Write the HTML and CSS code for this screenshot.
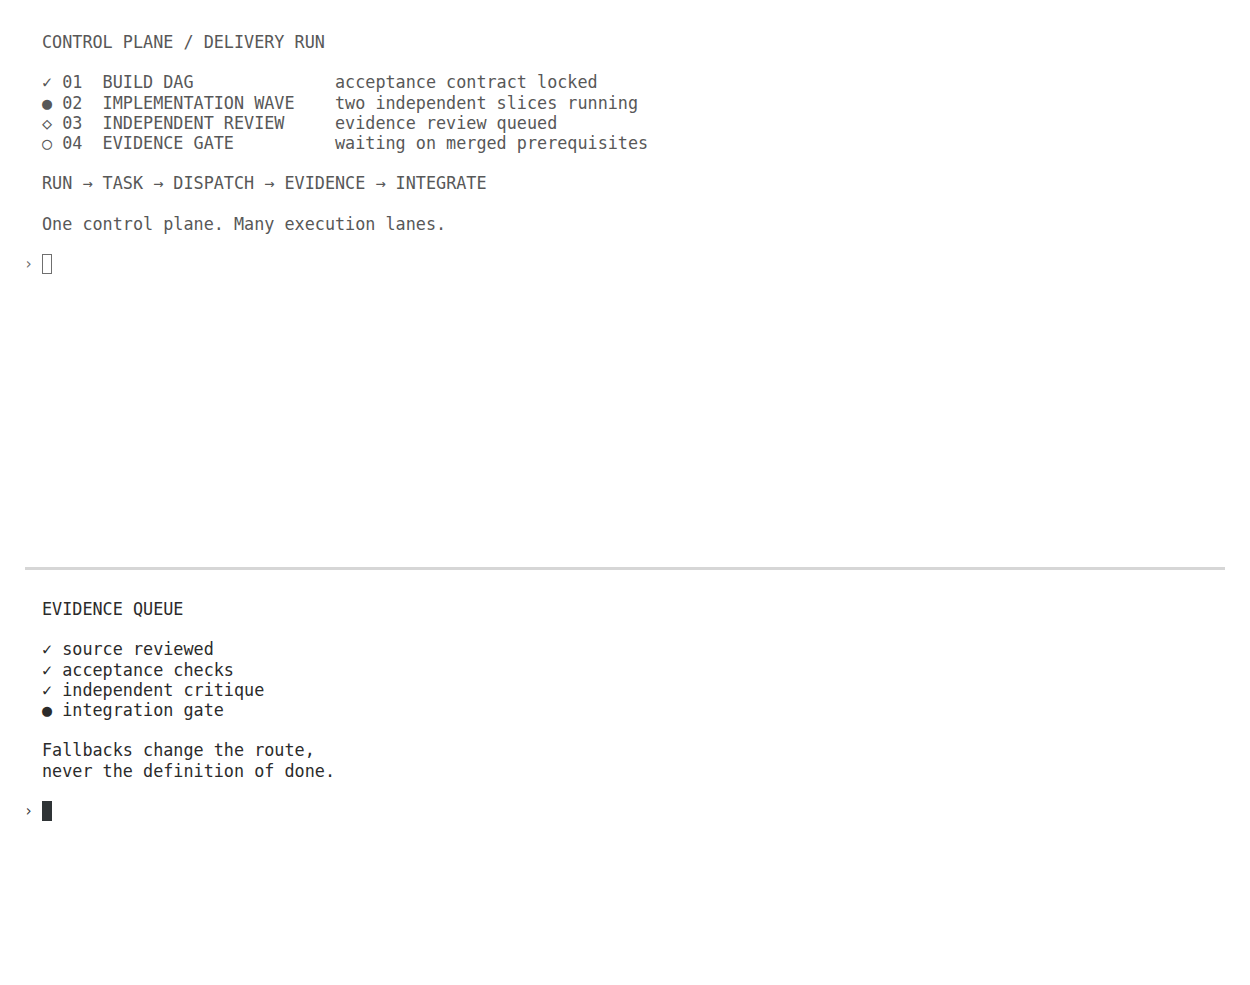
FILE: index.html
```html
<!DOCTYPE html>
<html lang="en">
<head>
<meta charset="utf-8">
<title>Control plane</title>
<link rel="stylesheet" href="styles.css">
</head>
<body>
<main class="term">
  <section class="pane pane-top dim">
    <div class="block">CONTROL PLANE / DELIVERY RUN</div>
    <div class="block steps">
      <span class="mk">✓</span><span>01</span><span>BUILD DAG</span><span>acceptance contract locked</span>
      <span class="mk">●</span><span>02</span><span>IMPLEMENTATION WAVE</span><span>two independent slices running</span>
      <span class="mk">◇</span><span>03</span><span>INDEPENDENT REVIEW</span><span>evidence review queued</span>
      <span class="mk">○</span><span>04</span><span>EVIDENCE GATE</span><span>waiting on merged prerequisites</span>
    </div>
    <div class="block">RUN → TASK → DISPATCH → EVIDENCE → INTEGRATE</div>
    <div class="block">One control plane. Many execution lanes.</div>
    <div class="prompt"><span class="caret">›</span><span class="cursor cursor-hollow"></span></div>
  </section>
  <hr class="divider">
  <section class="pane pane-bottom">
    <div class="block">EVIDENCE QUEUE</div>
    <div class="block list">
      <div><span class="mk2">✓</span>source reviewed</div>
      <div><span class="mk2">✓</span>acceptance checks</div>
      <div><span class="mk2">✓</span>independent critique</div>
      <div><span class="mk2">●</span>integration gate</div>
    </div>
    <div class="block">Fallbacks change the route,<br>never the definition of done.</div>
    <div class="prompt"><span class="caret">›</span><span class="cursor cursor-solid"></span></div>
  </section>
</main>
</body>
</html>
```

FILE: styles.css
```css
html, body {
  margin: 0;
  padding: 0;
  background: #ffffff;
}

.term {
  font-family: "DejaVu Sans Mono", "Liberation Mono", monospace;
  font-size: 16.8px;
  line-height: 20.2px;
  color: #2b2b2b;
  width: 1250px;
  height: 985px;
  display: flex;
  flex-direction: column;
  overflow: hidden;
}

.pane {
  padding-left: 24px;
  padding-right: 25px;
  box-sizing: border-box;
}

.pane-top {
  flex: none;
  height: 567px;
  padding-top: 32px;
}

.pane-bottom {
  flex: 1;
  padding-top: 29px;
}

.dim {
  color: #585858;
}

.block {
  padding-left: 18px;
  margin-bottom: 20.2px;
}

.steps {
  display: grid;
  grid-template-columns: 2ch 4ch 23ch auto;
  justify-content: start;
  white-space: nowrap;
}

.mk2 {
  display: inline-block;
  width: 2ch;
}

.divider {
  margin: 0 25px;
  height: 3px;
  border: 0;
  background: #d6d6d6;
  flex: none;
}

.prompt {
  display: flex;
  align-items: center;
  height: 20.2px;
}

.caret {
  width: 18px;
  font-size: 15px;
  color: #6a6a6a;
  line-height: 20px;
}

.pane-bottom .caret {
  color: #3a3a3a;
}

.cursor {
  display: inline-block;
  width: 10px;
  height: 20px;
  box-sizing: border-box;
}

.cursor-hollow {
  border: 1.5px solid #6f6f6f;
}

.cursor-solid {
  background: #2f3436;
}
```
